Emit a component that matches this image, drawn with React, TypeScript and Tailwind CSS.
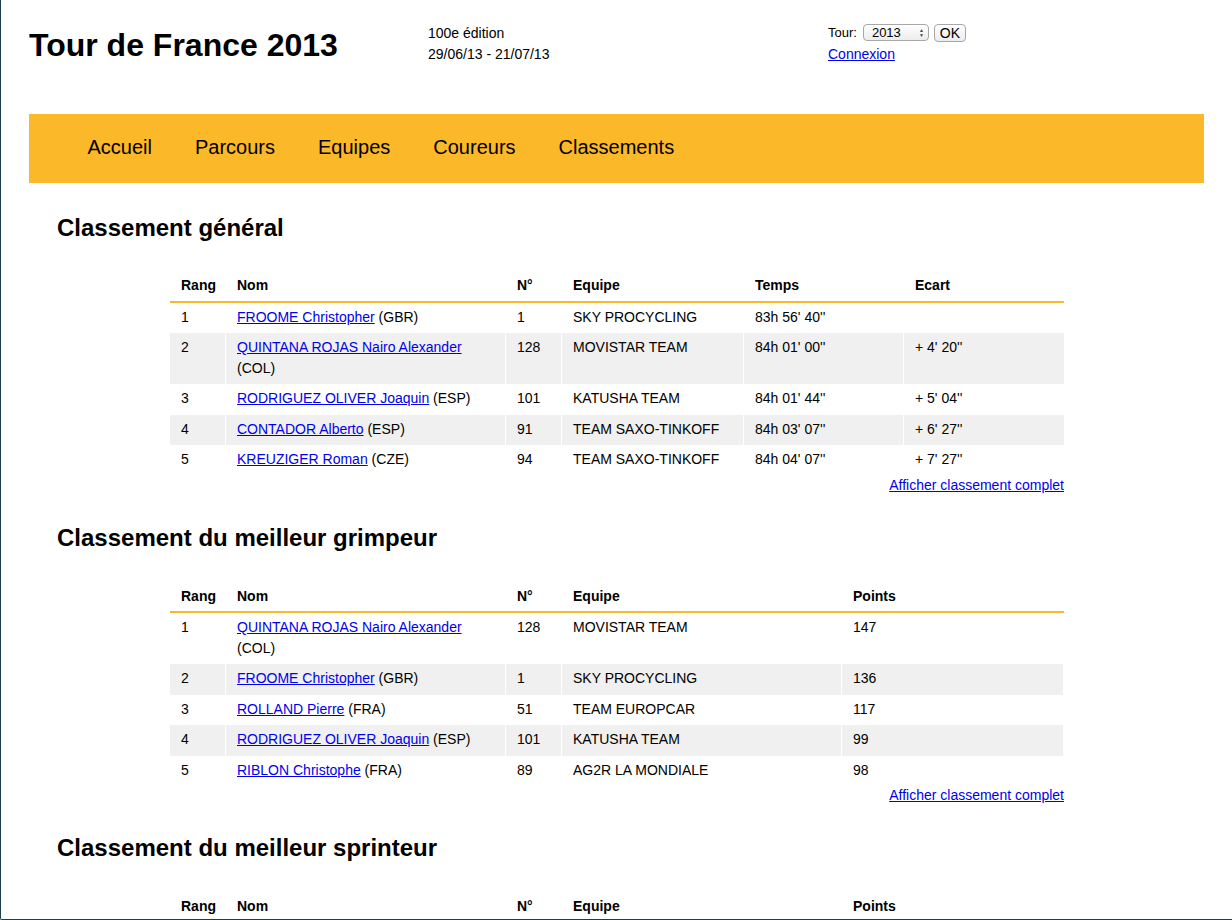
import React from "react";

type Row = { rang: number; nom: string; pays: string; num: number; equipe: string; a: string; b?: string };

const gen: Row[] = [
  { rang: 1, nom: "FROOME Christopher", pays: "GBR", num: 1, equipe: "SKY PROCYCLING", a: "83h 56' 40''", b: "" },
  { rang: 2, nom: "QUINTANA ROJAS Nairo Alexander", pays: "COL", num: 128, equipe: "MOVISTAR TEAM", a: "84h 01' 00''", b: "+ 4' 20''" },
  { rang: 3, nom: "RODRIGUEZ OLIVER Joaquin", pays: "ESP", num: 101, equipe: "KATUSHA TEAM", a: "84h 01' 44''", b: "+ 5' 04''" },
  { rang: 4, nom: "CONTADOR Alberto", pays: "ESP", num: 91, equipe: "TEAM SAXO-TINKOFF", a: "84h 03' 07''", b: "+ 6' 27''" },
  { rang: 5, nom: "KREUZIGER Roman", pays: "CZE", num: 94, equipe: "TEAM SAXO-TINKOFF", a: "84h 04' 07''", b: "+ 7' 27''" },
];

const grimp: Row[] = [
  { rang: 1, nom: "QUINTANA ROJAS Nairo Alexander", pays: "COL", num: 128, equipe: "MOVISTAR TEAM", a: "147" },
  { rang: 2, nom: "FROOME Christopher", pays: "GBR", num: 1, equipe: "SKY PROCYCLING", a: "136" },
  { rang: 3, nom: "ROLLAND Pierre", pays: "FRA", num: 51, equipe: "TEAM EUROPCAR", a: "117" },
  { rang: 4, nom: "RODRIGUEZ OLIVER Joaquin", pays: "ESP", num: 101, equipe: "KATUSHA TEAM", a: "99" },
  { rang: 5, nom: "RIBLON Christophe", pays: "FRA", num: 89, equipe: "AG2R LA MONDIALE", a: "98" },
];

const sprint: Row[] = [
  { rang: 1, nom: "SAGAN Peter", pays: "SVK", num: 71, equipe: "CANNONDALE PRO CYCLING", a: "409" },
  { rang: 2, nom: "CAVENDISH Mark", pays: "GBR", num: 121, equipe: "OMEGA PHARMA-QUICK STEP", a: "312" },
  { rang: 3, nom: "GREIPEL André", pays: "GER", num: 111, equipe: "LOTTO BELISOL", a: "267" },
];

const th = "text-left font-bold pl-[11px] py-[5px] leading-[20.5px] border-b-2 border-[#fbb829]";
const td = "align-top pl-[11px] pt-[4px] pb-[6px] leading-[20.5px] border-r border-white";

function Table({ rows, mode }: { rows: Row[]; mode: "temps" | "points" }) {
  return (
    <table className="w-[894px] ml-[141px] table-fixed border-separate border-spacing-0">
      <thead>
        <tr>
          <th className={`${th} w-[56px]`}>Rang</th>
          <th className={`${th} w-[280px]`}>Nom</th>
          <th className={`${th} w-[56px]`}>N°</th>
          {mode === "temps" ? (
            <>
              <th className={`${th} w-[182px]`}>Equipe</th>
              <th className={`${th} w-[160px]`}>Temps</th>
              <th className={`${th} w-[160px]`}>Ecart</th>
            </>
          ) : (
            <>
              <th className={`${th} w-[280px]`}>Equipe</th>
              <th className={`${th} w-[222px]`}>Points</th>
            </>
          )}
        </tr>
      </thead>
      <tbody>
        {rows.map((r, i) => (
          <tr key={r.rang} className={i % 2 === 1 ? "bg-[#eff0ef]" : ""}>
            <td className={td}>{r.rang}</td>
            <td className={`${td} pr-[30px]`}>
              <a href="#" className="text-[#0000ee] underline">{r.nom}</a> ({r.pays})
            </td>
            <td className={td}>{r.num}</td>
            <td className={td}>{r.equipe}</td>
            <td className={td}>{r.a}</td>
            {mode === "temps" && <td className={`${td} border-r-0`}>{r.b}</td>}
          </tr>
        ))}
      </tbody>
    </table>
  );
}

function MoreLink() {
  return (
    <div className="w-[894px] ml-[141px] text-right leading-[20px] -mt-[1px]">
      <a href="#" className="text-[#0000ee] underline">Afficher classement complet</a>
    </div>
  );
}

export default function App() {
  return (
    <div
      className="h-[920px] w-[1232px] overflow-hidden bg-white text-black border-l border-b border-[#1d4048] rounded-bl-[2px]"
      style={{ fontFamily: '"Liberation Sans", Arial, Helvetica, sans-serif' }}
    >
      {/* Header */}
      <div className="flex pl-[28px] pt-[23px] h-[114px]">
        <div className="w-[399px]">
          <h1 className="mt-[4px] text-[32px] font-bold leading-[37px]">Tour de France 2013</h1>
        </div>
        <div className="w-[400px] text-[14px] leading-[21px]">
          <div>100e édition</div>
          <div>29/06/13 - 21/07/13</div>
        </div>
        <div className="text-[14px] leading-[21px]">
          <div className="flex items-center h-[21px] text-[13px] -mt-[1px]">
            <span>Tour:</span>
            <span className="ml-[6px] flex items-center justify-between w-[66px] h-[17px] rounded-[4px] border border-[#a8a8a8] bg-gradient-to-b from-white to-[#ececec] pl-[8px] pr-[4px] text-[13px] leading-[15px]">
              <span>2013</span>
              <span className="flex flex-col items-center text-[5px] leading-[5px] text-[#444]">
                <span>▲</span>
                <span>▼</span>
              </span>
            </span>
            <span className="ml-[5px] flex items-center justify-center w-[32px] h-[18px] rounded-[4px] border border-[#a8a8a8] bg-gradient-to-b from-white to-[#ececec] text-[14px] leading-[16px]">
              OK
            </span>
          </div>
          <div className="mt-[1px]">
            <a href="#" className="text-[#0000ee] underline">Connexion</a>
          </div>
        </div>
      </div>

      {/* Nav */}
      <nav className="ml-[28px] w-[1175px] h-[69px] bg-[#fbb829] flex items-center pl-[37px] pb-[2px] text-[20px] leading-[23px]">
        {["Accueil", "Parcours", "Equipes", "Coureurs", "Classements"].map((n) => (
          <a key={n} href="#" className="px-[21.5px] text-black">
            {n}
          </a>
        ))}
      </nav>

      {/* Content */}
      <div className="ml-[28px] w-[1175px] text-[14px]">
        <h2 className="pl-[28px] mt-[31px] mb-[28px] text-[24px] font-bold leading-[28px]">Classement général</h2>
        <Table rows={gen} mode="temps" />
        <MoreLink />

        <h2 className="pl-[28px] mt-[29px] mb-[29px] text-[24px] font-bold leading-[28px]">Classement du meilleur grimpeur</h2>
        <Table rows={grimp} mode="points" />
        <MoreLink />

        <h2 className="pl-[28px] mt-[29px] mb-[29px] text-[24px] font-bold leading-[28px]">Classement du meilleur sprinteur</h2>
        <Table rows={sprint} mode="points" />
        <MoreLink />
      </div>
    </div>
  );
}
